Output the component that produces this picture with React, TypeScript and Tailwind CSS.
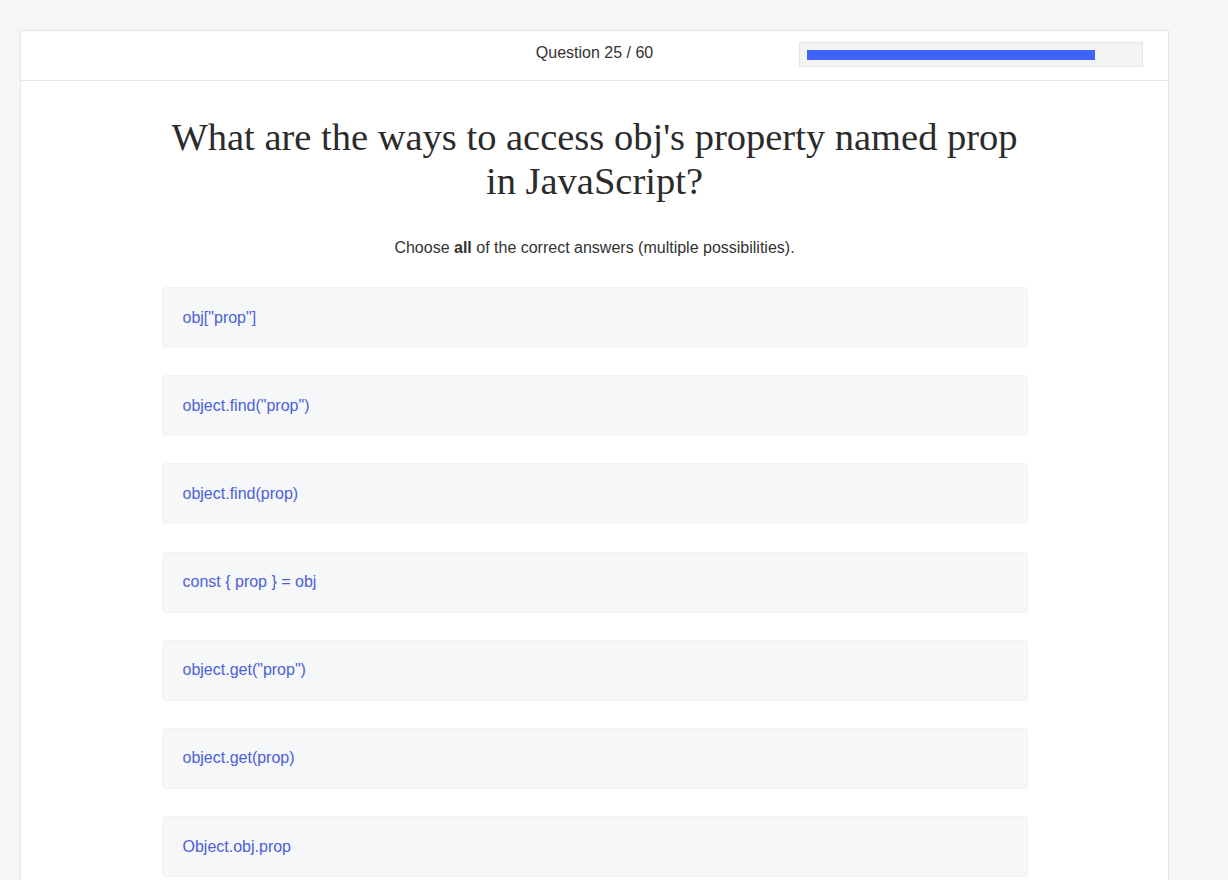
import React from "react";

const options = [
  'obj["prop"]',
  'object.find("prop")',
  "object.find(prop)",
  "const { prop } = obj",
  'object.get("prop")',
  "object.get(prop)",
  "Object.obj.prop",
];

export default function App() {
  return (
    <div className="min-h-[880px] bg-[#f6f6f6] pt-[30px] pl-[20px] font-['Liberation_Sans',Arial,sans-serif]">
      <div className="w-[1149px] min-h-[850px] bg-white border border-b-0 border-[#e3e5e8]">
        <div className="h-[50px] pb-[6px] border-b border-[#e3e5e8] relative flex items-center justify-center">
          <span className="text-[16px] text-[#333]">Question 25 / 60</span>
          <div className="absolute left-[778px] top-[11px] w-[344px] h-[25px] bg-[#f4f4f4] border border-[#e6e6e6] px-[7px] flex items-center">
            <div className="h-[10px] w-[288px] bg-[#3f64fd]" />
          </div>
        </div>
        <div className="flex flex-col items-center">
          <h1 className="mt-[33.5px] w-[862px] text-center text-[38.5px] leading-[44px] text-[#2b2b2b] font-['Liberation_Serif','Times_New_Roman',serif]">
            What are the ways to access obj's property named prop in JavaScript?
          </h1>
          <p className="mt-[33.5px] text-[16px] leading-[24px] text-[#333]">
            Choose <b className="font-bold">all</b> of the correct answers (multiple possibilities).
          </p>
          <div className="mt-[27px] w-[866px] flex flex-col gap-[27.2px]">
            {options.map((o) => (
              <div
                key={o}
                className="h-[61px] flex items-center px-[20px] rounded-[4px] bg-[#f6f7f9] border border-[#f0f1f3] text-[16px] text-[#4c60d8]"
              >
                {o}
              </div>
            ))}
          </div>
        </div>
      </div>
    </div>
  );
}
